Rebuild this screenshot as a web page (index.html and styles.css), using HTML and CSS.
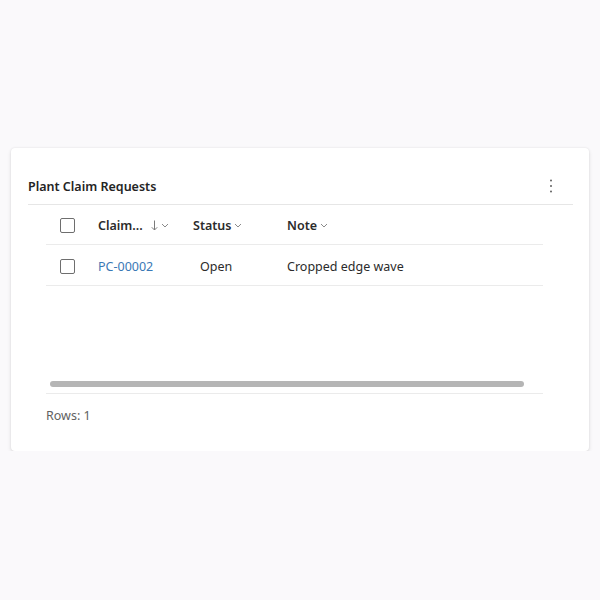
FILE: index.html
```html
<!DOCTYPE html>
<html lang="en">
<head>
<meta charset="utf-8">
<title>Plant Claim Requests</title>
<link rel="stylesheet" href="styles.css">
</head>
<body>
<div class="card">
  <div class="card-head">
    <h2 class="title">Plant Claim Requests</h2>
    <button class="more" aria-label="More options">
      <svg width="4" height="14" viewBox="0 0 4 14"><circle cx="2" cy="1.5" r="1" fill="#616161"/><circle cx="2" cy="7" r="1" fill="#616161"/><circle cx="2" cy="12.5" r="1" fill="#616161"/></svg>
    </button>
  </div>
  <div class="grid">
    <div class="row head-row">
      <div class="c-check"><span class="box"></span></div>
      <div class="c-id th">Claim...<svg class="sort" width="7" height="11" viewBox="0 0 7 11"><path d="M3.5 0.5v9.5M0.8 7.3l2.7 2.7 2.7-2.7" fill="none" stroke="#7a7a7a" stroke-width="1"/></svg><svg class="chev" width="8" height="5" viewBox="0 0 8 5"><path d="M1 1l3 3 3-3" fill="none" stroke="#8a8a8a" stroke-width="1"/></svg></div>
      <div class="c-status th">Status<svg class="chev" width="8" height="5" viewBox="0 0 8 5"><path d="M1 1l3 3 3-3" fill="none" stroke="#8a8a8a" stroke-width="1"/></svg></div>
      <div class="c-note th">Note<svg class="chev" width="8" height="5" viewBox="0 0 8 5"><path d="M1 1l3 3 3-3" fill="none" stroke="#8a8a8a" stroke-width="1"/></svg></div>
    </div>
    <div class="row data-row">
      <div class="c-check"><span class="box"></span></div>
      <div class="c-id"><a class="link" href="#">PC-00002</a></div>
      <div class="c-status td-status">Open</div>
      <div class="c-note">Cropped edge wave</div>
    </div>
    <div class="spacer"></div>
    <div class="scroll"><div class="thumb"></div></div>
  </div>
  <div class="foot">Rows: 1</div>
</div>
</body>
</html>
```
FILE: styles.css
```css
html, body {
  margin: 0;
  padding: 0;
  background: #faf9fb;
  font-family: "Noto Sans", "Open Sans", "Liberation Sans", sans-serif;
  color: #2b2b2b;
}
.card {
  margin: 148px 0 0 11px;
  width: 578px;
  height: 303px;
  background: #fff;
  border-radius: 4px;
  box-shadow: 0 0 2px rgba(0,0,0,0.10), 0 2px 4px rgba(0,0,0,0.10);
  box-sizing: border-box;
  display: flex;
  flex-direction: column;
}
.card-head {
  margin: 0 16px 0 17px;
  height: 57px;
  border-bottom: 1px solid #e6e6e6;
  display: flex;
  align-items: center;
  justify-content: space-between;
  padding-top: 20px;
  box-sizing: border-box;
}
.title {
  margin: 0;
  font-size: 12.5px;
  font-weight: 600;
  color: #242424;
}
.more {
  border: 0;
  background: none;
  padding: 0;
  margin-right: 20px;
  display: flex;
  width: 4px;
  height: 14px;
}
.grid {
  margin: 0 0 0 35px;
  width: 497px;
  display: flex;
  flex-direction: column;
}
.row {
  display: flex;
  align-items: center;
  border-bottom: 1px solid #ebebeb;
  font-size: 12.5px;
  box-sizing: border-box;
}
.head-row { height: 40px; padding-top: 1px; }
.data-row { height: 41px; padding-top: 2px; }
.c-check { width: 52px; padding-left: 14px; box-sizing: border-box; display: flex; }
.box {
  width: 13px;
  height: 13px;
  border: 1px solid #6e6e6e;
  border-radius: 2px;
  display: block;
}
.c-id { width: 95px; }
.c-status { width: 94px; }
.c-note { flex: 1; }
.th {
  font-weight: 600;
  display: flex;
  align-items: center;
}
.sort { margin-left: 8px; }
.chev { margin-left: 3px; }
.link { color: #3a78b5; text-decoration: none; }
.td-status { padding-left: 7px; box-sizing: border-box; }
.spacer { height: 95px; }
.scroll {
  height: 12px;
  border-bottom: 1px solid #ebebeb;
  display: flex;
  align-items: flex-start;
}
.thumb {
  margin-left: 4px;
  width: 474px;
  height: 6px;
  border-radius: 3px;
  background: #b5b5b5;
}
.foot {
  margin: 13px 0 0 35px;
  font-size: 12.5px;
  color: #616161;
}
```
